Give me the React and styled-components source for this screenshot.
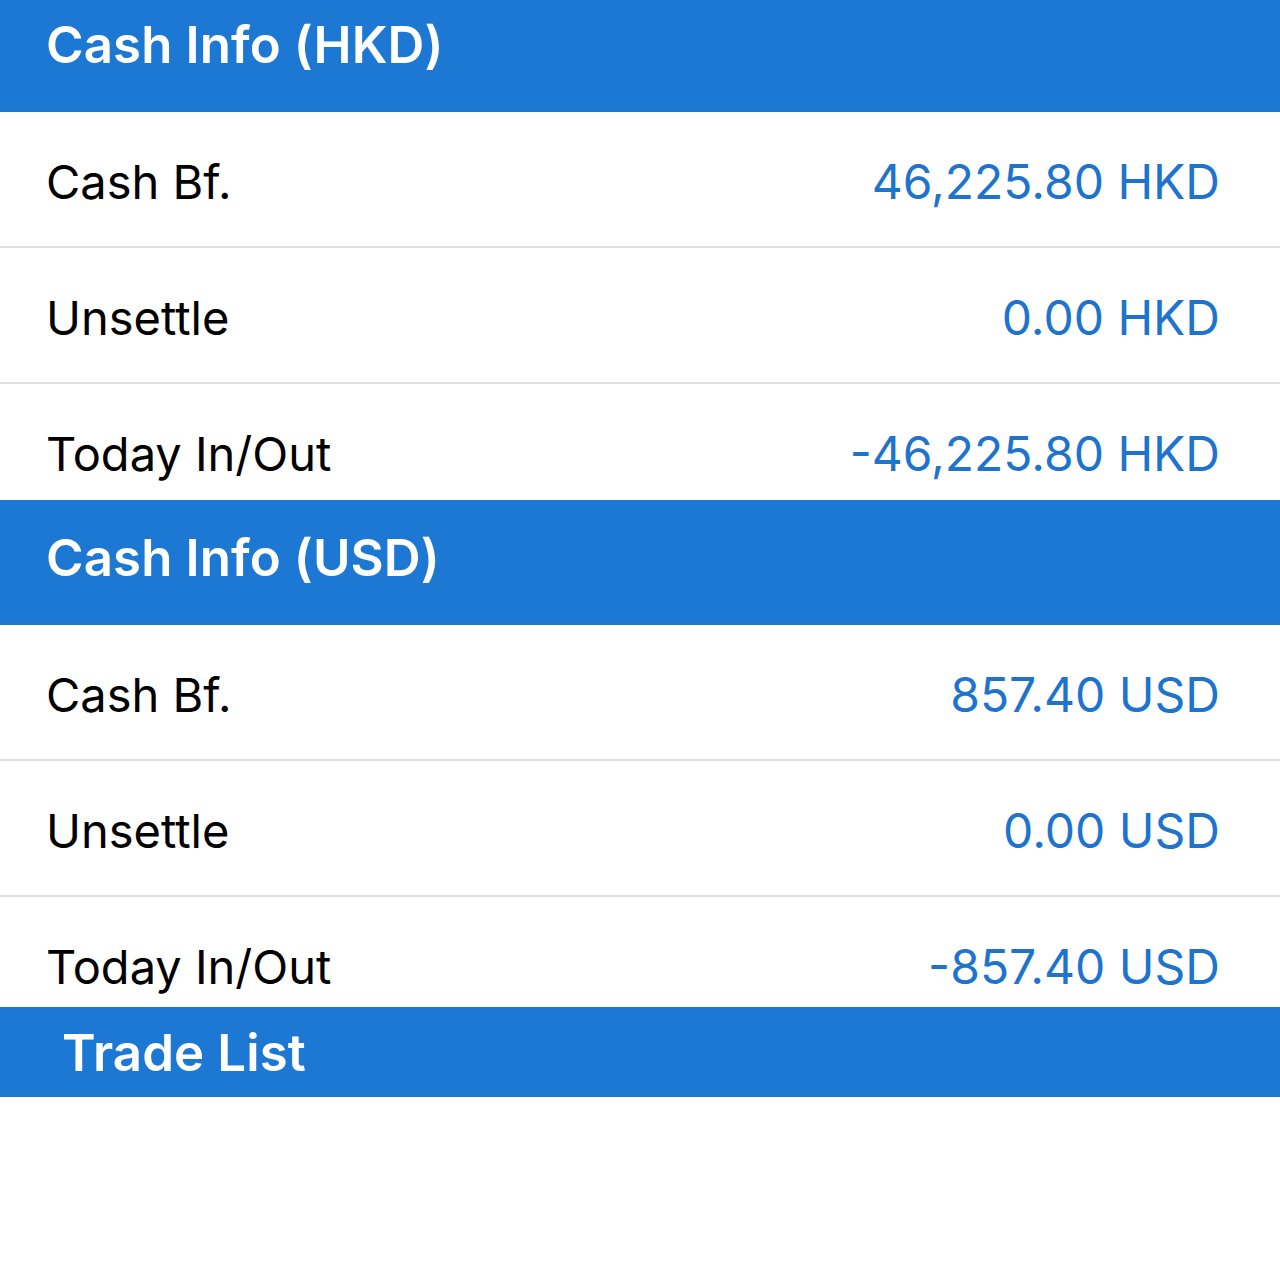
import React from "react";
import styled, { createGlobalStyle } from "styled-components";

const GlobalStyle = createGlobalStyle`
  html, body {
    margin: 0;
    padding: 0;
    background: #ffffff;
  }
  body {
    font-family: Inter, "Open Sans", "Liberation Sans", sans-serif;
    -webkit-font-smoothing: antialiased;
  }
`;

const sections = [
  {
    title: "Cash Info (HKD)",
    headerHeight: 112,
    headerLine: 90,
    rows: [
      { label: "Cash Bf.", value: "46,225.80 HKD" },
      { label: "Unsettle", value: "0.00 HKD" },
      { label: "Today In/Out", value: "-46,225.80 HKD" },
    ],
    lastRowHeight: 116,
  },
  {
    title: "Cash Info (USD)",
    headerHeight: 125,
    headerLine: 115,
    rows: [
      { label: "Cash Bf.", value: "857.40 USD" },
      { label: "Unsettle", value: "0.00 USD" },
      { label: "Today In/Out", value: "-857.40 USD" },
    ],
    lastRowHeight: 110,
  },
];

export default function App() {
  return (
    <>
      <GlobalStyle />
      <Screen>
        {sections.map((section) => (
          <Section key={section.title}>
            <Header $height={section.headerHeight} $line={section.headerLine}>
              {section.title}
            </Header>
            {section.rows.map((row, i) => {
              const last = i === section.rows.length - 1;
              return (
                <Row key={row.label} $height={last ? section.lastRowHeight : 136} $last={last}>
                  <Label>{row.label}</Label>
                  <Value>{row.value}</Value>
                </Row>
              );
            })}
          </Section>
        ))}
        <Header $height={90} $line={92} $indent={62}>
          Trade List
        </Header>
      </Screen>
    </>
  );
}

const Screen = styled.div`
  width: 1280px;
  height: 1280px;
  display: flex;
  flex-direction: column;
  background: #ffffff;
  overflow: hidden;
`;

const Section = styled.section`
  display: flex;
  flex-direction: column;
`;

const Header = styled.div`
  flex: none;
  height: ${(p) => p.$height}px;
  line-height: ${(p) => p.$line}px;
  padding-left: ${(p) => p.$indent || 46}px;
  background: #1c78d3;
  color: #ffffff;
  font-size: 51px;
  font-weight: 600;
  letter-spacing: 0.1px;
  white-space: nowrap;
  overflow: hidden;
`;

const Row = styled.div`
  flex: none;
  box-sizing: border-box;
  height: ${(p) => p.$height}px;
  line-height: 140px;
  display: flex;
  justify-content: space-between;
  padding: 0 60px 0 46px;
  border-bottom: ${(p) => (p.$last ? "none" : "2px solid #dedede")};
  overflow: hidden;
  white-space: nowrap;
`;

const Label = styled.span`
  color: #000000;
  font-size: 47px;
`;

const Value = styled.span`
  color: #1e74cc;
  font-size: 48px;
`;
